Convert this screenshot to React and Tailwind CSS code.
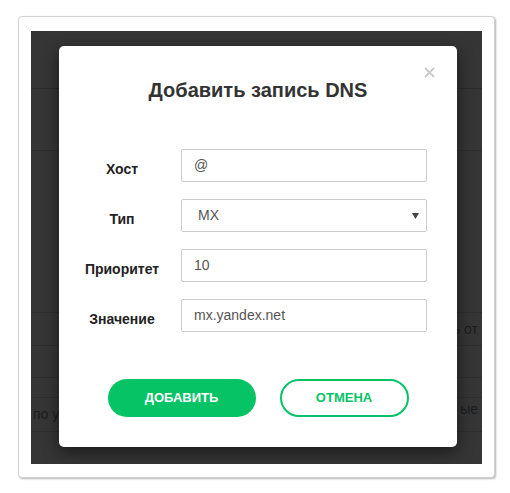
import React from "react";

const font = { fontFamily: '"Liberation Sans", Arial, sans-serif' };

function Field({ label, children }) {
  return (
    <div className="flex h-[33px] items-center">
      <div className="ml-[18px] mt-[7px] w-[90px] shrink-0 text-center text-[14px] font-bold text-[#222]">
        {label}
      </div>
      <div className="ml-[14px] h-[33px] w-[246px]">{children}</div>
    </div>
  );
}

function TextBox({ value }) {
  return (
    <div className="flex h-full w-full items-center rounded-[2px] border border-[#cccccc] bg-white pl-[12px] text-[14px] text-[#555]">
      {value}
    </div>
  );
}

export default function App() {
  return (
    <div style={font} className="h-[493px] w-[510px] overflow-hidden bg-white pl-[18px] pt-[16px]">
      <div className="h-[462px] w-[477px] rounded-[4px] border border-[#d2d2d2] bg-white px-[12px] pb-[13px] pt-[14px] shadow-[1px_1px_2px_rgba(0,0,0,0.3)]">
        <div className="relative h-[433px] w-[451px] overflow-hidden bg-[#353535] text-[14px] text-[#1c1c1c]">
          {/* background table (dimmed) */}
          <div className="flex flex-col">
            <div className="h-[58px] border-b border-[#2b2b2b]" />
            <div className="h-[62px] border-b border-[#2e2e2e]" />
            <div className="h-[162px] border-b border-[#2e2e2e]" />
            <div className="flex h-[33px] items-center justify-end border-b border-[#2e2e2e] pr-[4px]">
              ь от
            </div>
            <div className="h-[32px] border-b border-[#2e2e2e]" />
            <div className="h-[20px] border-b border-[#2e2e2e]" />
            <div className="flex h-[34px] items-center justify-between border-b border-[#2e2e2e] pl-[2px] pr-[4px]">
              <span>по услуге</span>
              <span className="-mt-[10px]">ые</span>
            </div>
          </div>

          {/* modal */}
          <div className="absolute left-[28px] top-[15px] h-[401px] w-[398px] rounded-[5px] bg-white pt-[32px] shadow-[0_5px_15px_rgba(0,0,0,0.5)]">
            <svg
              className="absolute left-[365px] top-[21px]"
              width="11"
              height="11"
              viewBox="0 0 11 11"
            >
              <path d="M1 1 L10 10 M10 1 L1 10" stroke="#c9c9c9" strokeWidth="1.8" />
            </svg>
            <div className="h-[24px] text-center text-[20px] font-bold leading-[24px] text-[#333]">
              Добавить запись DNS
            </div>
            <div className="mt-[47px] flex flex-col gap-[17px]">
              <Field label="Хост">
                <TextBox value="@" />
              </Field>
              <Field label="Тип">
                <div className="flex h-full w-full items-center justify-between rounded-[2px] border border-[#cccccc] bg-white pl-[16px] pr-[7px] text-[14px] text-[#555]">
                  <span>MX</span>
                  <svg width="7" height="6" viewBox="0 0 7 6">
                    <path d="M0 0 H7 L3.5 6 Z" fill="#444" />
                  </svg>
                </div>
              </Field>
              <Field label="Приоритет">
                <TextBox value="10" />
              </Field>
              <Field label="Значение">
                <TextBox value="mx.yandex.net" />
              </Field>
            </div>
            <div className="mt-[47px] flex justify-center gap-[24px]">
              <button className="h-[38px] w-[148px] rounded-full bg-[#06c466] text-[13px] font-bold text-white">
                ДОБАВИТЬ
              </button>
              <button className="h-[38px] w-[129px] rounded-full border-2 border-[#06c466] bg-white text-[13px] font-bold text-[#06c466]">
                ОТМЕНА
              </button>
            </div>
          </div>
        </div>
      </div>
    </div>
  );
}
